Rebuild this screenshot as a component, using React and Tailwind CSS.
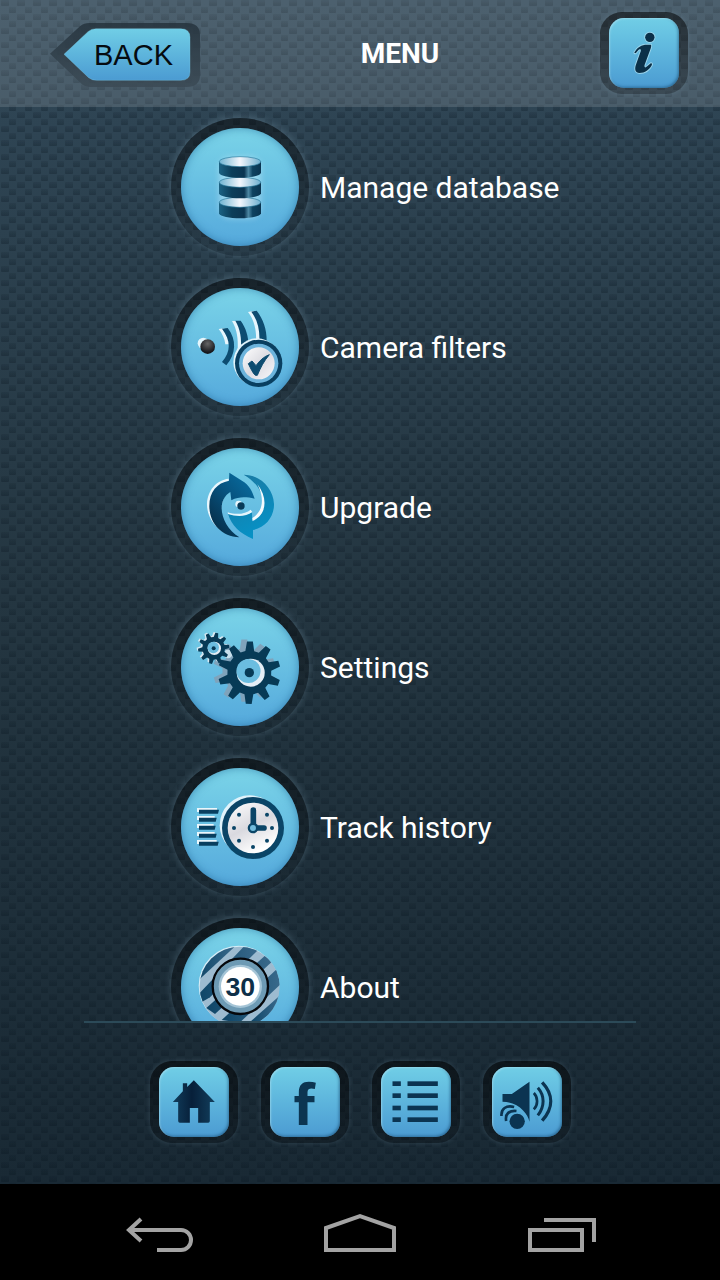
import React from "react";

const gearPath = (cx, cy, outer, inner, teeth, offset = 0) => {
  const step = (Math.PI * 2) / teeth;
  const points = [];
  for (let i = 0; i < teeth; i++) {
    const a = i * step + offset - Math.PI / 2;
    [
      [inner, -0.32],
      [outer, -0.15],
      [outer, 0.15],
      [inner, 0.32],
    ].forEach(([r, t]) => {
      const angle = a + t * step;
      points.push(
        `${(cx + r * Math.cos(angle)).toFixed(1)} ${(cy + r * Math.sin(angle)).toFixed(1)}`
      );
    });
  }
  return `M${points.join("L")}Z`;
};

const Gear = ({ cx, cy, outer, inner, hole, dot, offset }) => (
  <>
    <path d={gearPath(cx, cy, outer, inner, 10, offset)} fill="#073a56" />
    <circle cx={cx + hole * 0.1} cy={cy} r={hole} fill="#e4eef6" />
    <circle cx={cx - hole * 0.06} cy={cy - hole * 0.12} r={hole * 0.86} fill="#6bbde0" />
    <circle cx={cx} cy={cy} r={dot} fill="#073a56" />
  </>
);

const DatabaseIcon = () => (
  <>
    <defs>
      <linearGradient id="dbSide">
        <stop offset="0" stopColor="#1b6283" />
        <stop offset="0.3" stopColor="#0c3e5a" />
        <stop offset="0.6" stopColor="#0b3450" />
        <stop offset="0.7" stopColor="#4c87a3" />
        <stop offset="0.8" stopColor="#0e4260" />
        <stop offset="1" stopColor="#0a3551" />
      </linearGradient>
      <linearGradient id="dbTop">
        <stop offset="0" stopColor="#6fb4d2" />
        <stop offset="0.5" stopColor="#f3f6fc" />
        <stop offset="1" stopColor="#6fb0d0" />
      </linearGradient>
      <filter id="dbGlow" x="-30%" y="-30%" width="160%" height="160%">
        <feGaussianBlur stdDeviation="9" />
      </filter>
    </defs>
    <rect x="178" y="142" width="124" height="182" rx="30" fill="#c9ecfa" opacity="0.5" filter="url(#dbGlow)" />
    {[262, 202, 140].map((y) => (
      <g key={y}>
        <path
          d={`M177 ${y + 15}V${y + 48}C182 ${y + 68} 298 ${y + 68} 303 ${y + 48}V${y + 15}Z`}
          fill="url(#dbSide)"
        />
        <ellipse cx="240" cy={y + 15} rx="62" ry="15" fill="url(#dbTop)" stroke="#27799c" strokeWidth="2" />
      </g>
    ))}
  </>
);

const CameraIcon = () => (
  <>
    <defs>
      <radialGradient id="lens" cx="0.5" cy="0.3" r="0.6">
        <stop offset="0" stopColor="#666" />
        <stop offset="1" stopColor="#16181c" />
      </radialGradient>
      <linearGradient id="badge" x1="0" y1="0" x2="1" y2="1">
        <stop offset="0" stopColor="#fff" />
        <stop offset="0.5" stopColor="#dcdce2" />
        <stop offset="1" stopColor="#f7f7fa" />
      </linearGradient>
    </defs>
    <circle cx="130" cy="220" r="17" fill="#e3f5fc" />
    <circle cx="143" cy="230" r="22" fill="url(#lens)" />
    <g fill="#e6f6fd" transform="translate(-10 1)">
      <path d="M186 176L203 174C214 188 220 204 221 222L206 222C204 204 197 190 186 176Z" />
      <path d="M226 152L242 152C258 175 265 196 266 230L243 240C245 204 241 178 226 152Z" />
      <path d="M274 125L290 122C311 150 321 180 320 218L298 216C300 180 293 150 274 125Z" />
    </g>
    <g fill="#0d4c70">
      <path d="M186 176L203 174C231 209 228 253 199 286L186 276C213 244 213 212 186 176Z" />
      <path d="M226 152L242 152C258 175 265 196 266 230L243 240C245 204 241 178 226 152Z" />
      <path d="M274 125L290 122C311 150 321 180 320 218L298 216C300 180 293 150 274 125Z" />
    </g>
    <circle cx="291" cy="276" r="71" fill="#dff3fb" />
    <circle cx="296" cy="280" r="71" fill="#093f60" />
    <circle cx="296" cy="280" r="59" fill="#6cb4dc" />
    <circle cx="296" cy="280" r="48" fill="url(#badge)" />
    <path d="M265 281L276 273L288 287C299 272 311 260 328 254C311 274 301 294 292 316C285 318 281 314 265 281Z" fill="#0d4c70" stroke="#0d4c70" strokeWidth="3" />
  </>
);

const UpgradeIcon = () => (
  <>
    <defs>
      <linearGradient id="upLeft" x1="1" y1="0" x2="0.2" y2="1">
        <stop offset="0" stopColor="#0873a8" />
        <stop offset="0.5" stopColor="#07527e" />
        <stop offset="1" stopColor="#062c46" />
      </linearGradient>
      <linearGradient id="upRight" x1="0" y1="0" x2="0.4" y2="1">
        <stop offset="0" stopColor="#1c779f" />
        <stop offset="1" stopColor="#0791c5" />
      </linearGradient>
    </defs>
    <path d="M206 146C168 150 143 182 141 221C140 268 175 306 216 316C178 283 171 216 208 184Z" fill="#e9f7fd" />
    <path d="M208 128L247 153C267 165 276 181 284 206C258 201 238 199 214 211L211 186C167 212 181 286 238 322C185 319 150 282 148 231C147 185 171 159 207 152Z" fill="url(#upLeft)" />
    <path d="M251 134C299 134 340 174 342 222C343 259 317 293 279 300L279 327C239 309 215 288 204 251C229 257 254 259 276 247L277 274C325 256 325 176 251 134Z" fill="url(#upRight)" />
    <path d="M292 162C325 205 320 255 278 272L277 264C310 244 314 205 292 162Z" fill="#f3fafd" />
    <path d="M203 247C230 256 258 251 272 239L277 246C257 261 229 260 204 252Z" fill="#e5f5fc" />
    <circle cx="236" cy="222" r="10" fill="#e5f5fc" />
    <circle cx="243" cy="228" r="11" fill="#073a58" />
  </>
);

const SettingsIcon = () => (
  <>
    <g transform="translate(-11 -6)">
      <path d={gearPath(264, 248, 94, 66, 10)} fill="#7fa3bb" />
      <path d={gearPath(167, 178, 46, 34, 10, 0.2)} fill="#d7e9f3" />
    </g>
    <circle cx="204" cy="192" r="13" fill="#c7dfec" />
    <Gear cx={268} cy={248} outer={94} inner={66} hole={42} dot={14} offset={0.02} />
    <Gear cx={161} cy={175} outer={47} inner={34} hole={20} dot={6} offset={0.2} />
  </>
);

const HistoryIcon = () => (
  <>
    <defs>
      <linearGradient id="clockFace" x1="0" y1="0" x2="0.5" y2="1">
        <stop offset="0" stopColor="#fff" />
        <stop offset="0.55" stopColor="#d9d9df" />
        <stop offset="1" stopColor="#fff" />
      </linearGradient>
    </defs>
    {[179, 203, 227, 251, 275].map((y, i) => {
      const end = [177, 170, 167, 170, 176][i];
      return (
        <g key={y}>
          <path d={`M111 ${y - 5}H${end - 6}V${y + 2}H117V${y + 7}H111Z`} fill="#eaf7fc" />
          <path d={`M117 ${y}H${end}L${end - 3} ${y + 12}H117Z`} fill="#083f5f" />
        </g>
      );
    })}
    <circle cx="269" cy="226" r="90" fill="#e0f3fb" />
    <circle cx="279" cy="234" r="93" fill="#0a4567" />
    <circle cx="279" cy="234" r="76" fill="url(#clockFace)" />
    {[
      [237, 194],
      [321, 194],
      [222, 234],
      [336, 234],
      [237, 272],
      [321, 272],
      [279, 291],
    ].map(([x, y]) => (
      <circle key={`${x}-${y}`} cx={x} cy={y} r="6" fill="#0a4567" />
    ))}
    <path d="M280 180V234H312" fill="none" stroke="#0a4567" strokeWidth="17" strokeLinecap="round" />
    <circle cx="279" cy="234" r="16" fill="#0a4567" />
    <circle cx="279" cy="234" r="9" fill="#71bcdd" />
  </>
);

const AboutIcon = () => (
  <>
    <defs>
      <clipPath id="aboutClip">
        <circle cx="239" cy="230" r="120" />
      </clipPath>
      <linearGradient id="stripe">
        <stop offset="0" stopColor="#0e4567" />
        <stop offset="1" stopColor="#39698b" />
      </linearGradient>
    </defs>
    <circle cx="236" cy="227" r="120" fill="#d5ecf6" />
    <g clipPath="url(#aboutClip)">
      <rect x="110" y="100" width="260" height="260" fill="#9dbbd0" />
      <path d="M110 202C125 155 165 118 224 110L110 216Z" fill="url(#stripe)" />
      <path d="M253 108L294 120L150 262L116 282V252Z" fill="url(#stripe)" />
      <path d="M315 137L335 156L165 312L139 294Z" fill="url(#stripe)" />
      <path d="M350 178L361 223L239 338L185 330Z" fill="url(#stripe)" />
      <path d="M358 258L345 300L290 342L270 336Z" fill="url(#stripe)" />
    </g>
    <circle cx="241" cy="229" r="83" fill="#6d9ab4" stroke="#05070b" strokeWidth="7" />
    <circle cx="241" cy="229" r="65" fill="#a4c4d6" />
    <circle cx="241" cy="229" r="58" fill="#fff" />
    <text
      x="241"
      y="259"
      textAnchor="middle"
      fill="#0e2f48"
      className="font-['Liberation_Sans',sans-serif] text-[80px] font-bold"
    >
      30
    </text>
  </>
);

const menuItems = [
  { label: "Manage database", icon: DatabaseIcon },
  { label: "Camera filters", icon: CameraIcon },
  { label: "Upgrade", icon: UpgradeIcon },
  { label: "Settings", icon: SettingsIcon },
  { label: "Track history", icon: HistoryIcon },
  { label: "About", icon: AboutIcon },
];

const infoStem =
  "M221 157C229 142 243 134 258 134H270C272 136 271 140 270 144L251 196C250 203 254 204 259 199L270 190C273 190 274 192 273 195C266 209 252 219 236 219C223 218 221 208 225 195L240 153C241 146 236 147 231 152L225 159C222 160 220 159 221 157Z";

const InfoIcon = () => (
  <>
    <g fill="#a9dcef" stroke="#a9dcef" strokeWidth="6" opacity="0.8">
      <circle cx="267" cy="112" r="14" />
      <path d={infoStem} />
    </g>
    <circle cx="267" cy="112" r="14" fill="#0b3048" />
    <path d={infoStem} fill="#0b3048" />
  </>
);

const HomeIcon = () => (
  <>
    <defs>
      <linearGradient id="ink">
        <stop offset="0" stopColor="#113d5c" />
        <stop offset="0.45" stopColor="#071f39" />
        <stop offset="1" stopColor="#123f5d" />
      </linearGradient>
    </defs>
    <path
      d="M96 156L126 124V100H139V111L159 91L222 156H207V213Q207 218 202 218H172V174H147V218H117Q112 218 112 213V156Z"
      fill="url(#ink)"
    />
  </>
);

const FacebookIcon = () => (
  <path
    d="M472 225V157H459V138H472V126C472 104 484 95 502 95C510 95 517 96 523 98L520 117C508 114 498 115 498 127V138H519V157H498V225Z"
    fill="#0c3551"
  />
);

const ListIcon = () => (
  <>
    {[94, 130, 167, 202].map((y) => (
      <g key={y} fill="#0b3451">
        <rect x="93" y={y} width="25" height="14" />
        <rect x="138" y={y} width="91" height="14" />
      </g>
    ))}
  </>
);

const SoundIcon = () => (
  <>
    <path d="M423 132H451L504 95V215C498 190 472 157 423 155Z" fill="#0b3451" />
    <circle cx="467" cy="214" r="23" fill="#0b3451" />
    <g fill="none" stroke="#0b3451">
      <path d="M434 213C430 190 444 181 465 183" strokeWidth="8" />
      <path d="M420 198C418 176 434 165 458 171" strokeWidth="8" />
      <path d="M517 129C530 142 530 165 517 178" strokeWidth="8" />
      <path d="M529 113C550 137 550 169 529 196" strokeWidth="9" />
      <path d="M542 97C576 133 576 174 542 212" strokeWidth="10" />
    </g>
  </>
);

const shortcuts = [
  { label: "Home", icon: HomeIcon, viewBox: "56 51 207 210" },
  { label: "Facebook", icon: FacebookIcon, viewBox: "387 51 207 210" },
  { label: "List", icon: ListIcon, viewBox: "60 51 207 210" },
  { label: "Sound", icon: SoundIcon, viewBox: "393 51 207 210" },
];

const SquareButton = ({ label, viewBox, children }) => (
  <button
    aria-label={label}
    className="h-[82px] w-[88px] shrink-0 rounded-[22px] bg-linear-to-b from-black/50 to-black/20 py-1.5 shadow-[0_0_4px_1px_rgba(150,180,200,0.15)]"
  >
    <span className="mx-auto block h-[70px] w-[70px] overflow-hidden rounded-[15px] bg-linear-to-b from-[#70cee6] to-[#4b9bd2] shadow-[inset_1px_1px_2px_rgba(180,235,250,0.6),inset_-1px_-1px_3px_rgba(20,70,110,0.6)]">
      <svg viewBox={viewBox} className="h-full w-full">
        {children}
      </svg>
    </span>
  </button>
);

const CarbonBackground = () => (
  <svg className="absolute inset-0 h-full w-full" aria-hidden="true">
    <defs>
      <linearGradient id="weave" x1="0" y1="0" x2="0" y2="1">
        <stop offset="0" stopColor="#04101a" stopOpacity="0.1" />
        <stop offset="1" stopColor="#04101a" stopOpacity="0.27" />
      </linearGradient>
      <pattern id="carbon" width="16" height="14" patternUnits="userSpaceOnUse">
        <rect x="1" y="0" width="8" height="6" rx="1" fill="url(#weave)" />
        <rect x="9" y="7" width="7" height="6" rx="1" fill="url(#weave)" />
      </pattern>
    </defs>
    <rect width="100%" height="100%" fill="url(#carbon)" />
  </svg>
);

const App = () => {
  return (
    <div className="flex h-screen flex-col bg-black font-[Roboto,sans-serif] text-white">
      <div className="relative flex min-h-0 flex-1 flex-col bg-linear-to-b from-[#314858] via-[#243641] to-[#192934]">
        <CarbonBackground />

        <header className="relative flex h-[107px] shrink-0 items-start justify-between bg-white/13 pl-[50px] pr-8 pt-3">
          <button className="relative mt-[11px] h-16 w-[150px] pl-11 text-left font-['Liberation_Sans',Arial,sans-serif] text-[29px] leading-none text-[#050b10]">
            <svg viewBox="60 69 450 192" className="absolute inset-0 h-full w-full" aria-hidden="true">
              <defs>
                <linearGradient id="backFill" x1="0" y1="0" x2="0" y2="1">
                  <stop offset="0" stopColor="#70cee6" />
                  <stop offset="1" stopColor="#4b9bd2" />
                </linearGradient>
                <linearGradient id="backRim" x1="0" y1="0" x2="0" y2="1">
                  <stop offset="0" stopColor="#25333d" />
                  <stop offset="1" stopColor="#3b4a55" />
                </linearGradient>
              </defs>
              <path
                d="M60 161L150 79Q162 69 178 69H470Q510 69 510 105V225Q510 261 470 261H178Q166 261 156 253Z"
                fill="url(#backRim)"
                opacity="0.85"
              />
              <path
                d="M102 163L174 95Q184 86 198 86H452Q480 86 480 112V216Q480 241 452 241H200Q186 241 176 233Z"
                fill="url(#backFill)"
                stroke="#7fcfe6"
                strokeWidth="1"
              />
            </svg>
            <span className="relative">BACK</span>
          </button>
          <h1 className="mt-[26px] text-[28px] font-bold leading-8">MENU</h1>
          <SquareButton label="Information" viewBox="146 54 207 210">
            <InfoIcon />
          </SquareButton>
        </header>

        <nav className="relative min-h-0 flex-1 overflow-hidden">
          <ul className="mx-auto w-[400px]">
            {menuItems.map(({ label, icon: Icon }) => (
              <li key={label}>
                <button className="flex h-40 w-full items-center text-left">
                  <span className="flex w-40 shrink-0 justify-center">
                    <span className="rounded-full bg-linear-to-b from-black/45 to-black/5 p-2.5 shadow-[0_-1px_6px_1px_rgba(140,175,195,0.25)]">
                      <span className="block size-[118px] overflow-hidden rounded-full bg-linear-to-b from-[#7ad4e8] to-[#55a9dc] shadow-[inset_0_0_8px_rgba(30,100,150,0.6)]">
                        <svg viewBox="63 54 354 354" className="h-full w-full" aria-hidden="true">
                          <Icon />
                        </svg>
                      </span>
                    </span>
                  </span>
                  <span className="whitespace-nowrap pt-0.5 text-[30px] leading-9">{label}</span>
                </button>
              </li>
            ))}
          </ul>
        </nav>

        <footer className="relative shrink-0">
          <div className="mx-[84px] h-0.5 bg-[#2c4a58]" />
          <div className="flex justify-center gap-[23px] pb-[41px] pt-[38px]">
            {shortcuts.map(({ label, icon: Icon, viewBox }) => (
              <SquareButton key={label} label={label} viewBox={viewBox}>
                <Icon />
              </SquareButton>
            ))}
          </div>
        </footer>
      </div>

      <div className="flex h-24 shrink-0 items-center justify-between bg-black px-[124px]">
        <button aria-label="Back">
          <svg width="72" height="48" viewBox="0 0 72 48" fill="none" stroke="#a3a3a3" strokeWidth="4">
            <path d="M17 11L5 22L17 33M5 22H57A10 10 0 0 1 57 42H33" />
          </svg>
        </button>
        <button aria-label="Home screen">
          <svg width="72" height="48" viewBox="0 0 72 48" fill="none" stroke="#a3a3a3" strokeWidth="4">
            <path d="M2 42V20L36 8L70 20V42Z" />
          </svg>
        </button>
        <button aria-label="Recent apps">
          <svg width="72" height="48" viewBox="0 0 72 48" fill="none" stroke="#a3a3a3" strokeWidth="4">
            <path d="M6 22H58V42H6ZM20 12H70V34" />
          </svg>
        </button>
      </div>
    </div>
  );
};

export default App;
